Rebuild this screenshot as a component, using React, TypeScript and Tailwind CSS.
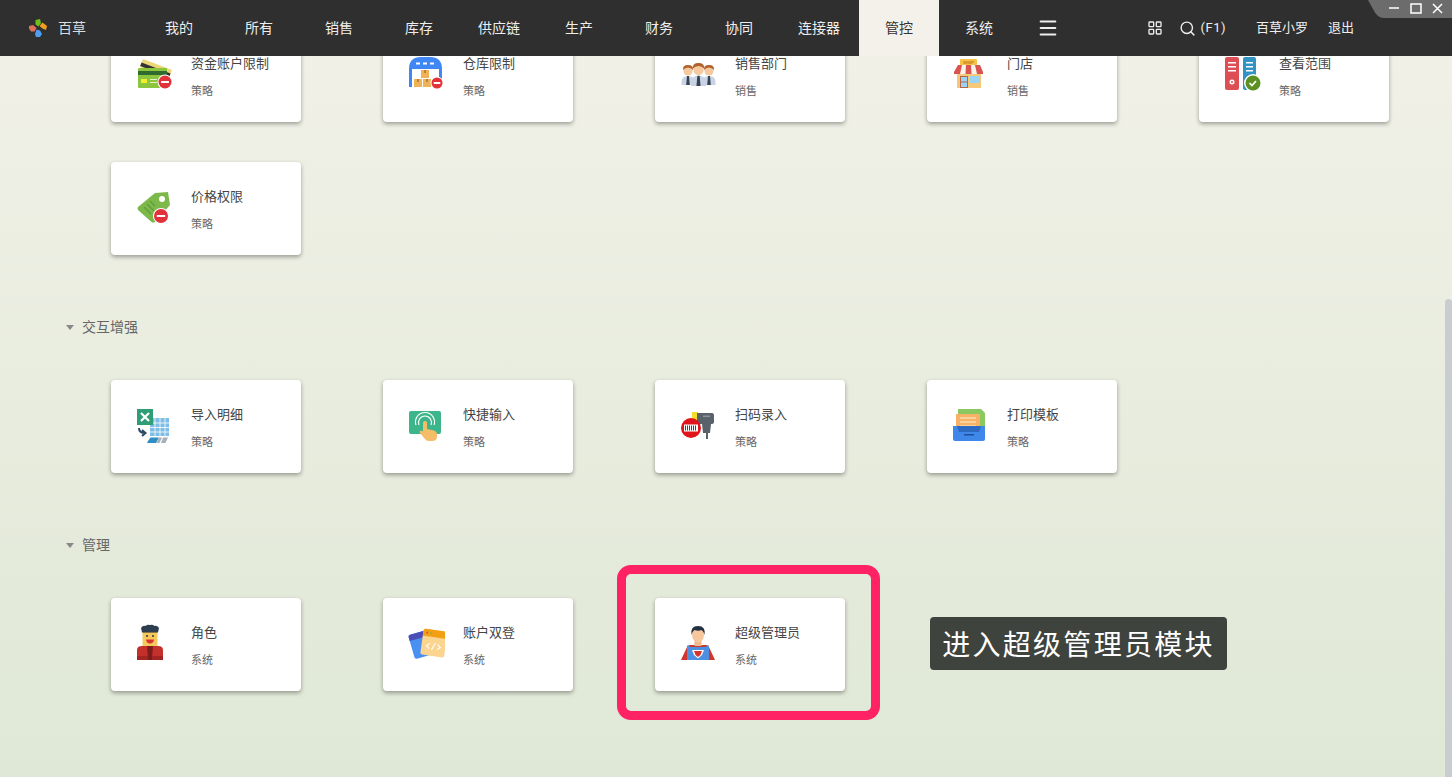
import type { ReactNode } from 'react';
import { LayoutGrid, Menu, Search } from 'lucide-react';

const NAV = ['我的', '所有', '销售', '库存', '供应链', '生产', '财务', '协同', '连接器', '管控', '系统'];

function Minus({ cx, cy, r = 6.5 }: { cx: number; cy: number; r?: number }) {
  return (
    <g>
      <circle cx={cx} cy={cy} r={r + 1} fill="#fff" />
      <circle cx={cx} cy={cy} r={r} fill="#e2323a" />
      <rect x={cx - r * 0.6} y={cy - 1} width={r * 1.2} height={2} fill="#fff" />
    </g>
  );
}

function Icon({ children }: { children: ReactNode }) {
  return (
    <svg viewBox="0 0 40 40" className="w-10 h-10 shrink-0">
      {children}
    </svg>
  );
}

function CardsIcon() {
  return (
    <Icon>
      <path d="M10 5l29 11-3 8-29-11z" fill="#ecd675" />
      <path d="M8.500 8.500l29 11-1.300 3.500-29-11z" fill="#333" />
      <rect x="5" y="14" width="29" height="20" rx="1" fill="#8cc63f" />
      <rect x="5" y="17" width="29" height="4" fill="#2f6b2f" />
      <rect x="8" y="25" width="6" height="4" fill="#f7ee2a" />
      <rect x="17" y="25" width="7" height="1" fill="#e6f2c8" />
      <rect x="17" y="28" width="7" height="1" fill="#e6f2c8" />
      <Minus cx={32} cy={28} />
    </Icon>
  );
}

function WarehouseIcon() {
  return (
    <Icon>
      <path d="M4 33V15Q4 3 16 3h9q12 0 12 12v18h-3V15H7v18z" fill="#3f87f5" />
      <rect x="11" y="8.500" width="4" height="2" fill="#fff" />
      <rect x="18" y="8.500" width="4" height="2" fill="#fff" />
      <rect x="25" y="8.500" width="4" height="2" fill="#fff" />
      <rect x="16" y="16" width="8" height="8" fill="#f0b256" />
      <rect x="9" y="25" width="8" height="8" fill="#f0b256" />
      <rect x="18" y="25" width="8" height="8" fill="#f0b256" />
      <rect x="19.300" y="16" width="1.400" height="3" fill="#a8712a" />
      <rect x="12.300" y="25" width="1.400" height="3" fill="#a8712a" />
      <rect x="21.300" y="25" width="1.400" height="3" fill="#a8712a" />
      <Minus cx={32} cy={29} r={5.500} />
    </Icon>
  );
}

function Person({ x, y, s = 1 }: { x: number; y: number; s?: number }) {
  return (
    <g transform={`translate(${x} ${y}) scale(${s})`}>
      <path d="M-6.500 14q0-6 6.500-6t6.500 6v3h-13z" fill="#c9d3e6" />
      <path d="M-1 8h2l.800 9h-3.600z" fill="#39424f" />
      <circle cx="0" cy="3" r="4.500" fill="#f4c9a0" />
      <path d="M-5 2q-.500-5 5-5t5 5q-2-2.500-5-2.500t-5 2.500z" fill="#b0622a" />
    </g>
  );
}

function TeamIcon() {
  return (
    <Icon>
      <Person x={11} y={14} />
      <Person x={32} y={14} />
      <Person x={21.500} y={12.500} s={1.15} />
    </Icon>
  );
}

function ShopIcon() {
  return (
    <Icon>
      <rect x="11" y="5" width="17" height="6" rx="1" fill="#f6c342" />
      <text x="19.500" y="9.500" fontSize="4" fontWeight="700" textAnchor="middle" fill="#c77a1e">SHOP</text>
      <rect x="8" y="18" width="24" height="16" fill="#f6c87a" />
      <path d="M9 11h22l3 7v2H5v-2z" fill="#f7f2ea" />
      <path d="M9 11h4l-2 9H5v-2zM17 11h5l.500 9h-6zM26 11h5l3 7v2h-6z" fill="#d9534f" />
      <rect x="11" y="22" width="8" height="12" fill="#b5654a" />
      <rect x="12" y="23" width="6" height="4.500" fill="#9bd3f2" />
      <rect x="12" y="28.500" width="6" height="4.500" fill="#9bd3f2" />
      <rect x="21" y="22" width="10" height="7" fill="#9bd3f2" />
    </Icon>
  );
}

function ServerIcon() {
  return (
    <Icon>
      <rect x="4" y="3" width="14" height="33" rx="2" fill="#dd4f55" />
      <rect x="22" y="3" width="13" height="33" rx="2" fill="#3193c4" />
      {[8, 12, 16].map((y) => (
        <g key={y}>
          <rect x="7" y={y} width="8" height="1.500" fill="#fff" />
          <rect x="25" y={y} width="7" height="1.500" fill="#fff" />
        </g>
      ))}
      <circle cx="11" cy="28" r="2.500" fill="#fff" />
      <circle cx="11" cy="28" r="1" fill="#dd4f55" />
      <circle cx="32" cy="29" r="9" fill="#fff" />
      <circle cx="32" cy="29" r="7.500" fill="#5d9022" />
      <path d="M28.500 29l2.500 2.500 4-4.500" fill="none" stroke="#fff" strokeWidth="1.700" />
    </Icon>
  );
}

function TagIcon() {
  return (
    <Icon>
      <path d="M5 20L22 6l13-1 2 13-15 17q-2 1-3.500 0L5 23q-1-2 0-3z" fill="#7cb94a" />
      <circle cx="29" cy="12" r="3" fill="#fff" />
      <path d="M11 20l7 7M14 17l7 7M17 14l5 5" stroke="#5f9b38" strokeWidth="1.200" />
      <Minus cx={28} cy={29} r={7} />
    </Icon>
  );
}

function ExcelIcon() {
  return (
    <Icon>
      <path d="M17 13h19v18H17z" fill="#7dbde6" />
      <path d="M17 18h19M17 22.500h19M17 27h19M22 13v18M27 13v18M32 13v18" stroke="#fff" strokeWidth="0.800" />
      <rect x="4" y="4" width="16" height="16" fill="#2f9e77" />
      <path d="M8 8l8 8M16 8l-8 8" stroke="#fff" strokeWidth="2.200" />
      <path d="M6 23q0 5 6 5M9 25l3.500 3-3.500 3" fill="none" stroke="#2b4a66" strokeWidth="2" />
      <path d="M15 36l2.500-3.500H26l-3 5.500h-9z" fill="#2f8fc4" />
      <path d="M26 32.500h3l-2.500 5.500h-3zM30 32.500h5l-2.500 5.500H28z" fill="#a9b1b8" />
    </Icon>
  );
}

function TouchIcon() {
  return (
    <Icon>
      <rect x="4" y="6" width="32" height="23" rx="2" fill="#3cb58b" />
      <path d="M14 20a6.500 6.500 0 1 1 12 0M11 20a9.500 9.500 0 1 1 18 0" fill="none" stroke="#fff" strokeWidth="1.100" />
      <path d="M18 18a2 2 0 0 1 4 0v6l7 1.500q3 1 3 4v2q0 4.500-5 4.500h-3q-3 0-4.500-2.500L15 28q-1-2 1-2.500l2 1z" fill="#f5bd68" />
    </Icon>
  );
}

function ScannerIcon() {
  return (
    <Icon>
      <path d="M15 7h6v13h-6z" fill="#f4dc2b" />
      <path d="M20 8h15q2 0 2 2v7q0 2-2 2h-1l-1 9h-7l-1-9h-5z" fill="#59616b" />
      <rect x="29" y="28" width="2" height="6" fill="#59616b" />
      <rect x="26" y="10.500" width="7" height="1.500" fill="#8d949c" />
      <circle cx="14" cy="23" r="10" fill="#e0141b" />
      <rect x="7" y="19.500" width="14" height="7" fill="#fff" />
      <path d="M8.500 20.500v5M10.500 20.500v5M12.500 20.500v5M14.500 20.500v5M16.500 20.500v5M18.500 20.500v5" stroke="#444" strokeWidth="1" />
    </Icon>
  );
}

function PrintIcon() {
  return (
    <Icon>
      <path d="M9 4h23l4 4v16H9z" fill="#8cc860" />
      <rect x="7" y="9" width="24" height="15" fill="#f7b267" />
      <path d="M11 13h16M11 17h16M11 21h16" stroke="#f9dcae" strokeWidth="1.500" />
      <path d="M4 21h32v13q0 2-2 2H6q-2 0-2-2z" fill="#3f87e8" />
      <path d="M8 21h24l-2 6H10z" fill="#2c6ac2" />
      <rect x="15" y="29" width="10" height="1.500" fill="#1f4f96" />
    </Icon>
  );
}

function RoleIcon() {
  return (
    <Icon>
      <path d="M4 37V27q0-4 5-4h16q5 0 5 4v10z" fill="#c4302b" />
      <rect x="4" y="33" width="26" height="4" fill="#a32522" />
      <path d="M14 22h6l-1 15h-4z" fill="#7d1d1b" />
      <rect x="9.500" y="8" width="15" height="15" fill="#f7c95c" />
      <rect x="10" y="8" width="14" height="2" fill="#e5b03e" />
      <circle cx="14" cy="13" r="1" fill="#333" />
      <circle cx="20" cy="13" r="1" fill="#333" />
      <path d="M13 16.500h8q-.500 4-4 4t-4-4z" fill="#d8342e" />
      <path d="M8 5q2-3 4.500-2 2-2 4.500-1 2.500-1 4.500 1 2.500-1 4.500 2l-1 4.500H9z" fill="#2d3e50" />
    </Icon>
  );
}

function BrowserIcon() {
  return (
    <Icon>
      <g transform="rotate(-16 16 21)">
        <rect x="6" y="9" width="23" height="25" rx="2" fill="#4a90f0" />
        <path d="M6 11q0-2 2-2h19q2 0 2 2v4H6z" fill="#4b4fb5" />
      </g>
      <g transform="rotate(8 28 19)">
        <rect x="17" y="7" width="24" height="26" rx="2" fill="#fbd48f" />
        <path d="M17 9q0-2 2-2h20q2 0 2 2v5H17z" fill="#f29f14" />
        <circle cx="21" cy="10.500" r="1" fill="#e0513f" />
        <circle cx="25" cy="10.500" r="1" fill="#7cb94a" />
        <path d="M25 21l-3 2.500 3 2.500M33 21l3 2.500-3 2.500M30.500 20l-3 7" fill="none" stroke="#fff" strokeWidth="1.100" />
      </g>
    </Icon>
  );
}

function HeroIcon() {
  return (
    <Icon>
      <path d="M11 22L4 37h6l3-10zM31 22l7 15h-6l-3-10z" fill="#d4342b" />
      <path d="M10 24q0-2 3-2h16q3 0 3 2v13H10z" fill="#4d8fe0" />
      <path d="M12 22h18l-1 2H13z" fill="#c93a2e" />
      <rect x="17.500" y="16" width="7" height="7" fill="#f0b98a" />
      <path d="M15 27h12l-2 5-4 3.500-4-3.500z" fill="#fff" />
      <path d="M17 28h8l-1.500 4-2.500 2-2.500-2z" fill="#d4342b" />
      <ellipse cx="21" cy="12" rx="6" ry="7.500" fill="#f6c69c" />
      <path d="M14.500 12Q13 3 21 3t6.500 9q-1-4-3-5-3 1.500-7 0-2 1-3 5z" fill="#22303f" />
    </Icon>
  );
}

function Logo() {
  return (
    <svg viewBox="0 0 18 18" className="w-[18px] h-[18px]">
      <path d="M6.500 1l4.500-1 1 4-2.500 3.500-3-2z" fill="#6fbe1b" />
      <path d="M10.500 7l3-3.500L18 7l-1 4-3.500-1.500z" fill="#f0a01e" />
      <path d="M7.500 10.500l3.500 1 2 3.500-2 3H7l-1-3z" fill="#4f9df0" />
      <path d="M0 7l4-1 3.500 3-2 3.500H2l-2-3z" fill="#e0705a" />
    </svg>
  );
}

function Tile({ icon, title, sub }: { icon: ReactNode; title: string; sub: string }) {
  return (
    <div className="flex h-[93px] w-[190px] gap-[18px] rounded bg-white pt-[25px] pl-[22px] shadow-[0_2px_4px_rgba(0,0,0,0.35)]">
      {icon}
      <div className="pt-px">
        <p className="text-[13px] leading-[18px] text-[#444]">{title}</p>
        <p className="mt-[11px] text-[11px] leading-4 text-[#666]">{sub}</p>
      </div>
    </div>
  );
}

function Section({ title }: { title: string }) {
  return (
    <div className="mt-[62px] mb-[43px] flex h-5 items-center pl-[66px] text-sm text-[#666]">
      <span className="mr-2 h-0 w-0 border-x-[4.500px] border-t-[5px] border-x-transparent border-t-[#888]" />
      {title}
    </div>
  );
}

export default function App() {
  return (
    <div className="relative flex h-screen flex-col overflow-hidden bg-gradient-to-b from-[#f2f1e8] to-[#dfe8d6] font-[Roboto,'Noto_Sans_CJK_SC',sans-serif]">
      <header className="relative z-10 flex h-14 shrink-0 items-center bg-[#2f2f2f] text-[#eee]">
        <div className="flex w-[139px] items-center gap-[11px] pl-[29px] text-sm text-[#ddd]">
          <Logo />
          <span>百草</span>
        </div>
        {NAV.map((item) => (
          <div
            key={item}
            className={
              item === '管控'
                ? 'flex h-14 w-20 items-center justify-center bg-[#f3f1ea] text-sm text-[#333]'
                : 'flex h-14 w-20 items-center justify-center text-sm'
            }
          >
            {item}
          </div>
        ))}
        <Menu size={22} strokeWidth={2.2} className="ml-[18px]" />
        <div className="ml-auto flex items-center pr-[98px] text-[13px] text-[#eee]">
          <LayoutGrid size={16} strokeWidth={2} />
          <Search size={17} strokeWidth={2} className="ml-4" />
          <span className="ml-[5px] tracking-[0.5px]">(F1)</span>
          <span className="ml-[30px]">百草小罗</span>
          <span className="ml-5">退出</span>
        </div>
        <svg viewBox="0 0 84 18" className="absolute top-0 right-0 h-[18px] w-[84px]">
          <path d="M0 0h84v18H16Q9 18 5 9z" fill="#6c6c6c" />
          <path d="M21 8h10M43 4h10v9H43zM65 4l9 9M74 4l-9 9" fill="none" stroke="#fff" strokeWidth="1.500" />
        </svg>
      </header>

      <main className="min-h-0 flex-1 overflow-hidden">
        <div className="-mt-[27px]">
          <div className="grid grid-cols-[repeat(5,190px)] gap-x-[82px] gap-y-10 pl-[111px]">
            <Tile icon={<CardsIcon />} title="资金账户限制" sub="策略" />
            <Tile icon={<WarehouseIcon />} title="仓库限制" sub="策略" />
            <Tile icon={<TeamIcon />} title="销售部门" sub="销售" />
            <Tile icon={<ShopIcon />} title="门店" sub="销售" />
            <Tile icon={<ServerIcon />} title="查看范围" sub="策略" />
            <Tile icon={<TagIcon />} title="价格权限" sub="策略" />
          </div>
          <Section title="交互增强" />
          <div className="grid grid-cols-[repeat(5,190px)] gap-x-[82px] pl-[111px]">
            <Tile icon={<ExcelIcon />} title="导入明细" sub="策略" />
            <Tile icon={<TouchIcon />} title="快捷输入" sub="策略" />
            <Tile icon={<ScannerIcon />} title="扫码录入" sub="策略" />
            <Tile icon={<PrintIcon />} title="打印模板" sub="策略" />
          </div>
          <Section title="管理" />
          <div className="grid grid-cols-[repeat(5,190px)] gap-x-[82px] pl-[111px]">
            <Tile icon={<RoleIcon />} title="角色" sub="系统" />
            <Tile icon={<BrowserIcon />} title="账户双登" sub="系统" />
            <Tile icon={<HeroIcon />} title="超级管理员" sub="系统" />
          </div>
        </div>
      </main>

      {/* scrollbar thumb */}
      <div className="absolute top-[299px] right-0 bottom-0 w-[7px] rounded-t bg-[#c9cdcf]" />

      {/* annotation over the page */}
      <div className="absolute top-[565px] left-[617px] h-[155px] w-[263px] rounded-[14px] border-[9px] border-[#ff2265]" />
      <div className="absolute top-[617px] left-[930px] flex h-[53px] w-[297px] items-center justify-center rounded bg-[#3f433d] pt-1 text-[28px] tracking-[2.3px] text-white">
        进入超级管理员模块
      </div>
    </div>
  );
}
